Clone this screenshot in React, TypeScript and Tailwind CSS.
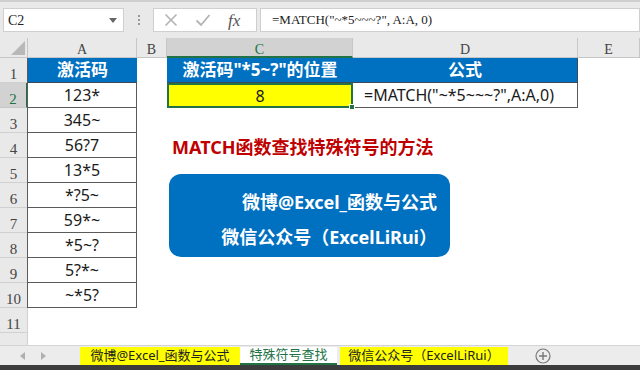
import React from "react";

const SANS = "font-['Noto_Sans','Noto_Sans_CJK_SC',sans-serif]";
const SERIF = "font-['Liberation_Serif','Noto_Sans_CJK_SC',serif]";

const codes = ["123*", "345~", "56?7", "13*5", "*?5~", "59*~", "*5~?", "5?*~", "~*5?"];

function RowHead({ n, active }: { n?: number; active?: boolean }) {
  return (
    <div
      className={`w-[28px] shrink-0 flex items-center justify-center pt-2 border-b border-r ${SERIF} text-[15px] ${
        active
          ? "bg-[#d2d2d2] text-[#217346] border-b-[#c6c6c6] border-r-[#217346] border-r-2"
          : "bg-[#e9e9e9] text-[#444] border-[#d0d0d0]"
      }`}
    >
      {n}
    </div>
  );
}

function ColHead({ w, label, active }: { w: string; label: string; active?: boolean }) {
  return (
    <div
      className={`${w} shrink-0 flex items-center justify-center pt-1 border-r ${SERIF} text-[14px] ${
        active
          ? "bg-[#d2d2d2] text-[#217346] border-[#c6c6c6] border-b-2 border-b-[#217346]"
          : "bg-[#e9e9e9] text-[#444] border-r-[#c6c6c6] border-b border-b-[#c6c6c6]"
      }`}
    >
      {label}
    </div>
  );
}

export default function App() {
  return (
    <div className={`w-[640px] h-[370px] flex flex-col overflow-hidden bg-white ${SANS}`}>
      {/* formula bar */}
      <div className="h-[38px] shrink-0 bg-[#e9e9e9] border-t-2 border-[#cfcfcf] flex items-start pt-[6px] pl-[3px]">
        <div className={`w-[121px] h-[24px] bg-white border border-[#cfcfcf] flex items-center justify-between pl-[4px] pr-[6px] ${SERIF} text-[14px] text-[#222]`}>
          <span>C2</span>
          <svg width="8" height="5" viewBox="0 0 8 5">
            <path d="M0 0h8L4 5z" fill="#666" />
          </svg>
        </div>
        <div className="w-[29px] h-[24px] flex flex-col items-center justify-center gap-[2px]">
          <span className="w-[2px] h-[2px] bg-[#999]" />
          <span className="w-[2px] h-[2px] bg-[#999]" />
          <span className="w-[2px] h-[2px] bg-[#999]" />
        </div>
        <div className="w-[104px] h-[24px] bg-white border border-[#cfcfcf] flex items-center pl-[10px] gap-[17px]">
          <svg width="14" height="14" viewBox="0 0 14 14">
            <path d="M1.5 1.5l11 11M12.5 1.5l-11 11" stroke="#b3b3b3" strokeWidth="1.6" />
          </svg>
          <svg width="16" height="14" viewBox="0 0 16 14">
            <path d="M1.5 7.5l4.5 4.5L14.5 2" stroke="#b3b3b3" strokeWidth="1.8" fill="none" />
          </svg>
          <span className={`${SERIF} italic text-[17px] text-[#555] leading-none`}>fx</span>
        </div>
        <div className={`ml-[3px] flex-1 h-[24px] bg-white border border-[#cfcfcf] flex items-center pl-[11px] ${SERIF} text-[13px] text-[#222] whitespace-pre`}>
          {'=MATCH("~*5~~~?", A:A, 0)'}
        </div>
      </div>

      {/* sheet */}
      <div className="relative flex-1 overflow-hidden">
        <div className="flex h-[20px]">
          <div className="w-[28px] shrink-0 bg-[#e9e9e9] border-r border-b border-[#c6c6c6] flex items-end justify-end p-[2px]">
            <svg width="14" height="14" viewBox="0 0 14 14">
              <path d="M14 0V14H0z" fill="#b8b8b8" />
            </svg>
          </div>
          <ColHead w="w-[109px]" label="A" />
          <ColHead w="w-[30px]" label="B" />
          <ColHead w="w-[186px]" label="C" active />
          <ColHead w="w-[225px]" label="D" />
          <ColHead w="flex-1" label="E" />
        </div>

        {/* row 1 */}
        <div className="flex h-[25px]">
          <RowHead n={1} />
          <div className="w-[109px] shrink-0 bg-[#0070c0] border-b border-[#3a4a5a] flex items-center justify-center text-white font-bold text-[17px]">
            激活码
          </div>
          <div className="w-[30px] shrink-0" />
          <div className="w-[186px] shrink-0 bg-[#0070c0] border-b border-[#3a4a5a] flex items-center justify-center text-white font-bold text-[17px] whitespace-nowrap">
            激活码"*5~?"的位置
          </div>
          <div className="w-[225px] shrink-0 bg-[#0070c0] border-b border-r border-[#3a4a5a] flex items-center justify-center text-white font-bold text-[17px]">
            公式
          </div>
        </div>

        {/* rows 2..10 */}
        {codes.map((c, i) => {
          const n = i + 2;
          return (
            <div key={n} className="flex h-[25px]">
              <RowHead n={n} active={n === 2} />
              <div className="w-[109px] shrink-0 border-r border-b border-[#5a5a5a] flex items-center justify-center text-[16px] text-[#1a1a1a]">
                {c}
              </div>
              <div className="w-[30px] shrink-0" />
              {n === 2 ? (
                <>
                  <div className="relative w-[186px] shrink-0 bg-[#ffff00] border-2 border-[#217346] flex items-center justify-center text-[16px] text-[#1a1a1a]">
                    8
                    <span className="absolute right-[-4px] bottom-[-4px] w-[6px] h-[6px] bg-[#217346] border border-white" />
                  </div>
                  <div className="w-[225px] shrink-0 border-r border-b border-[#5a5a5a] flex items-center pl-[11px] text-[16px] text-[#1a1a1a] whitespace-nowrap">
                    =MATCH("~*5~~~?",A:A,0)
                  </div>
                </>
              ) : n === 4 ? (
                <div className="w-[186px] shrink-0 flex items-center pl-[5px] pt-[3px] whitespace-nowrap text-[#c00000] font-bold text-[18px]">
                  MATCH函数查找特殊符号的方法
                </div>
              ) : null}
            </div>
          );
        })}

        <div className="flex h-[25px]">
          <RowHead n={11} />
        </div>
        <div className="flex h-[25px]">
          <RowHead />
        </div>

        {/* dark left edge of the column A table */}
        <div className="absolute left-[27px] top-[20px] w-px h-[250px] bg-[#5a5a5a]" />

        {/* floating shape */}
        <div className="absolute left-[169px] top-[136px] w-[281px] h-[83px] rounded-[12px] bg-[#0070c0] flex flex-col items-end justify-center gap-[11px] pt-[8px] pr-[13px] text-white font-bold text-[18px] leading-[24px]">
          <div>微博@Excel_函数与公式</div>
          <div>微信公众号（ExcelLiRui）</div>
        </div>
      </div>

      {/* sheet tabs */}
      <div className="h-[20px] shrink-0 bg-[#ececec] border-t border-[#d4d4d4] flex items-end text-[13px]">
        <div className="w-[80px] h-full flex items-center pl-[20px] gap-[16px]">
          <svg width="5" height="8" viewBox="0 0 5 8">
            <path d="M5 0v8L0 4z" fill="#b0b0b0" />
          </svg>
          <svg width="5" height="8" viewBox="0 0 5 8">
            <path d="M0 0v8l5-4z" fill="#b0b0b0" />
          </svg>
        </div>
        <div className="h-[18px] w-[160px] bg-[#ffff00] flex items-center justify-center text-[#222] whitespace-nowrap">
          微博@Excel_函数与公式
        </div>
        <div className="h-[18px] w-[97px] bg-white border-b-2 border-[#217346] flex items-center justify-center text-[#217346] whitespace-nowrap">
          特殊符号查找
        </div>
        <div className="ml-[3px] h-[18px] w-[168px] bg-[#ffff00] flex items-center justify-center text-[#222] whitespace-nowrap">
          微信公众号（ExcelLiRui）
        </div>
        <div className="h-full flex items-center ml-[27px]">
          <svg width="16" height="16" viewBox="0 0 16 16">
            <circle cx="8" cy="8" r="7" fill="none" stroke="#777" strokeWidth="1.2" />
            <path d="M8 4v8M4 8h8" stroke="#777" strokeWidth="1.4" />
          </svg>
        </div>
      </div>
      <div className="h-[5px] shrink-0 bg-[#3c3c3c]" />
    </div>
  );
}
